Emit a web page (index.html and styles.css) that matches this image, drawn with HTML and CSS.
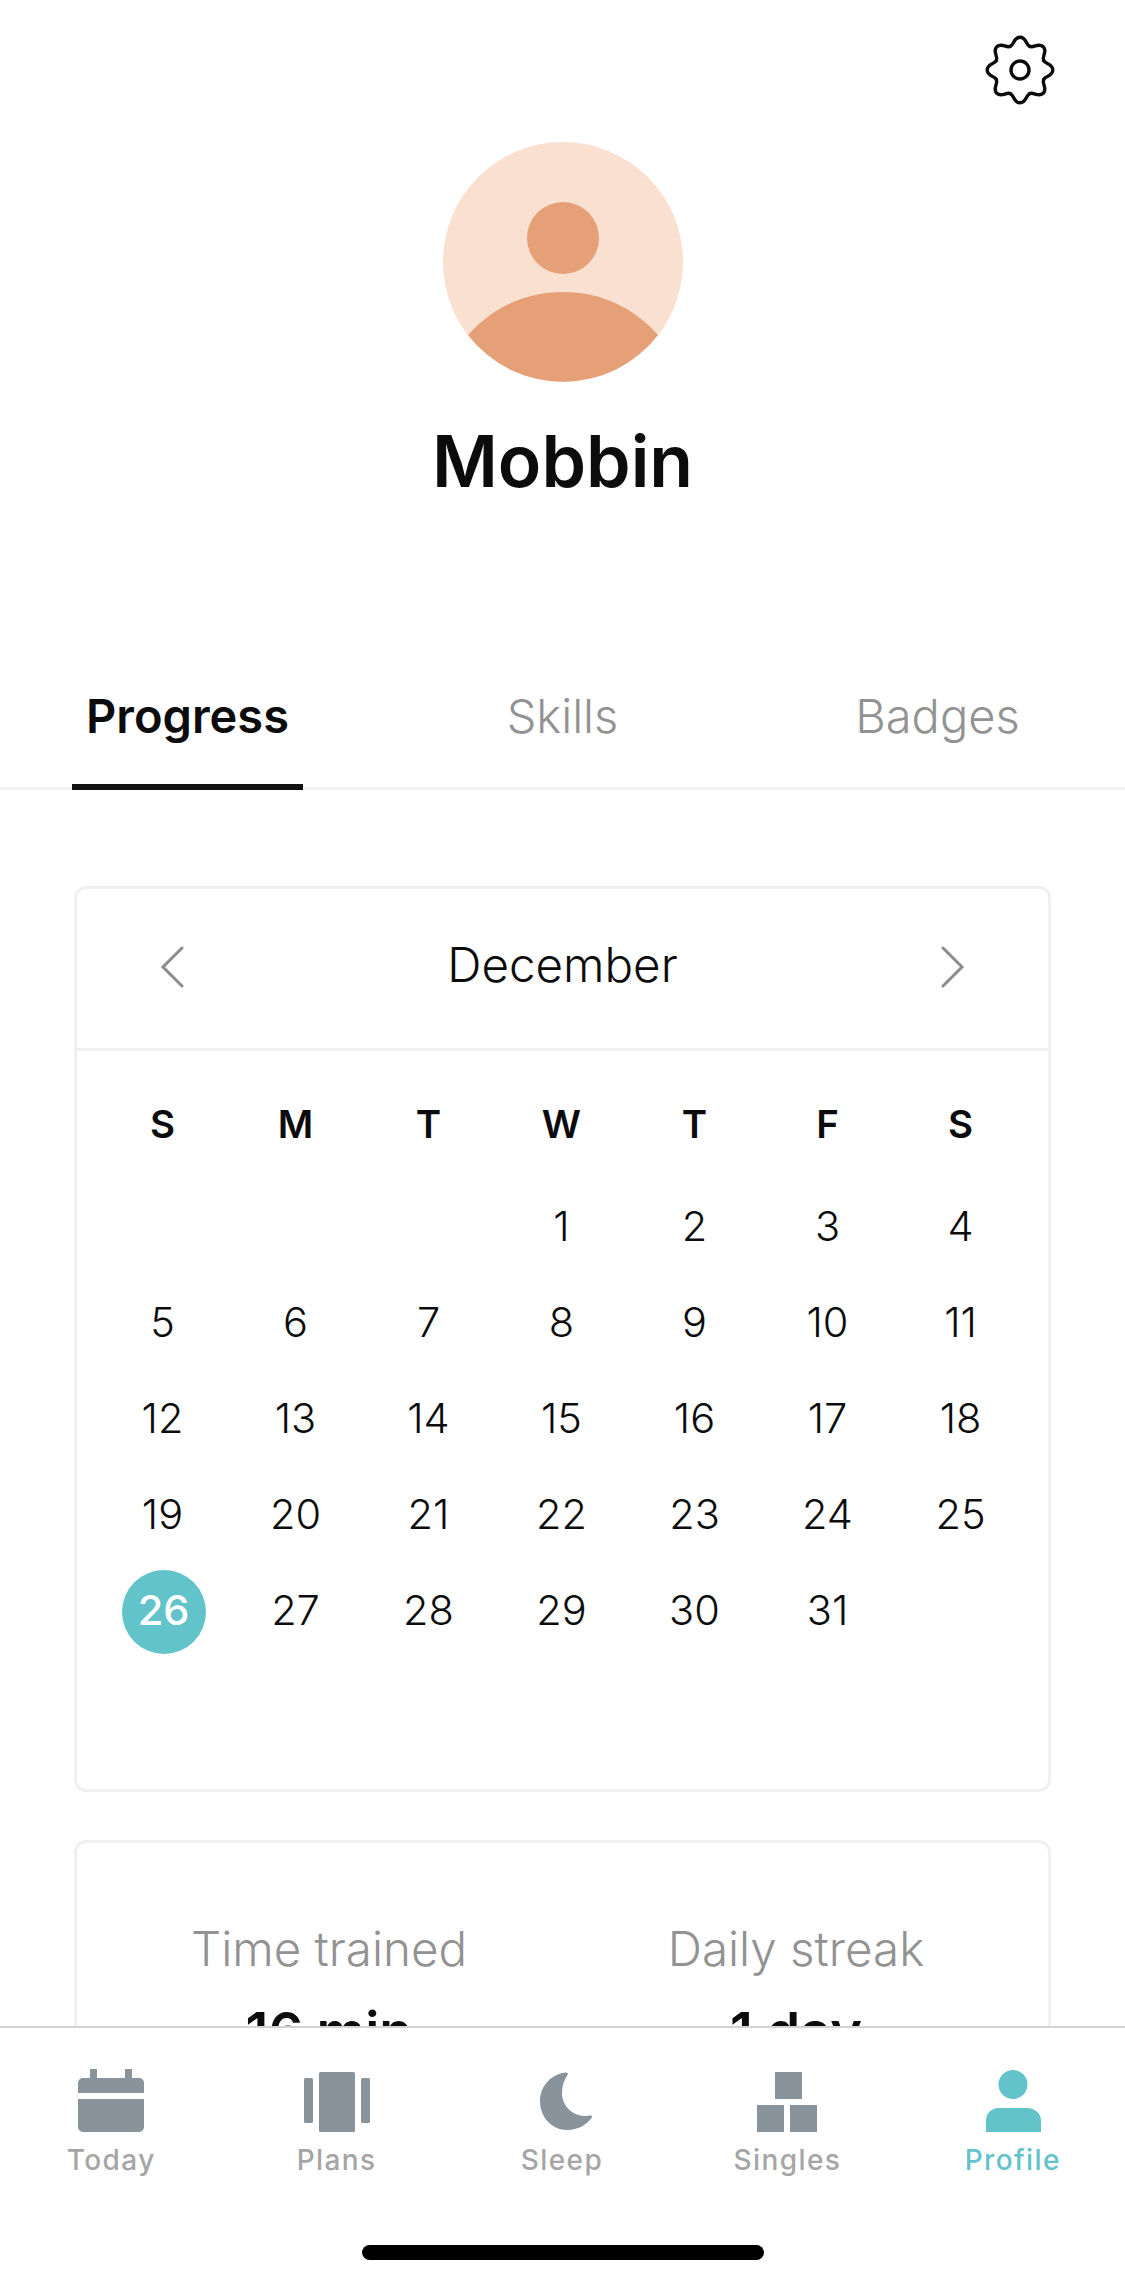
FILE: index.html
```html
<!DOCTYPE html>
<html lang="en">
<head>
<meta charset="utf-8">
<title>Profile</title>
<link rel="stylesheet" href="styles.css">
</head>
<body>
<div class="app">
  <main class="content">
    <header class="top">
      <button class="settings" aria-label="Settings">
        <svg width="72" height="72" viewBox="0 0 72 72" fill="none" stroke="#0c0c0c" stroke-width="3.4" stroke-linecap="round">
          <path d="M26.24 12.44C30.4 10.72 29.5 3.2 36 3.2C42.5 3.2 41.6 10.72 45.76 12.44"/>
          <path transform="rotate(45 36 36)" d="M26.24 12.44C30.4 10.72 29.5 3.2 36 3.2C42.5 3.2 41.6 10.72 45.76 12.44"/>
          <path transform="rotate(90 36 36)" d="M26.24 12.44C30.4 10.72 29.5 3.2 36 3.2C42.5 3.2 41.6 10.72 45.76 12.44"/>
          <path transform="rotate(135 36 36)" d="M26.24 12.44C30.4 10.72 29.5 3.2 36 3.2C42.5 3.2 41.6 10.72 45.76 12.44"/>
          <path transform="rotate(180 36 36)" d="M26.24 12.44C30.4 10.72 29.5 3.2 36 3.2C42.5 3.2 41.6 10.72 45.76 12.44"/>
          <path transform="rotate(225 36 36)" d="M26.24 12.44C30.4 10.72 29.5 3.2 36 3.2C42.5 3.2 41.6 10.72 45.76 12.44"/>
          <path transform="rotate(270 36 36)" d="M26.24 12.44C30.4 10.72 29.5 3.2 36 3.2C42.5 3.2 41.6 10.72 45.76 12.44"/>
          <path transform="rotate(315 36 36)" d="M26.24 12.44C30.4 10.72 29.5 3.2 36 3.2C42.5 3.2 41.6 10.72 45.76 12.44"/>
          <circle cx="36" cy="36" r="9"/>
        </svg>
      </button>
      <svg class="avatar" width="240" height="240" viewBox="0 0 240 240">
        <circle cx="120" cy="120" r="120" fill="#f9e0d0"/>
        <circle cx="120" cy="96" r="36" fill="#e5a077"/>
        <path d="M25 193C50 165 83 150 120 150s70 15 95 43a120 120 0 0 1-190 0Z" fill="#e5a077"/>
      </svg>
      <h1 class="name">Mobbin</h1>
    </header>

    <nav class="tabs">
      <a class="tab tab-active">Progress</a>
      <a class="tab">Skills</a>
      <a class="tab">Badges</a>
    </nav>

    <section class="card calendar">
      <div class="cal-head">
        <svg width="24" height="42" viewBox="0 0 24 42" fill="none" stroke="#8c8c8c" stroke-width="3" stroke-linecap="round"><path d="M22 2 3 21l19 19"/></svg>
        <span class="month">December</span>
        <svg width="24" height="42" viewBox="0 0 24 42" fill="none" stroke="#8c8c8c" stroke-width="3" stroke-linecap="round"><path d="m2 2 19 19L2 40"/></svg>
      </div>
      <div class="cal-grid">
        <span class="dow">S</span><span class="dow">M</span><span class="dow">T</span><span class="dow">W</span><span class="dow">T</span><span class="dow">F</span><span class="dow">S</span>
        <span></span><span></span><span></span><span>1</span><span>2</span><span>3</span><span>4</span>
        <span>5</span><span>6</span><span>7</span><span>8</span><span>9</span><span>10</span><span>11</span>
        <span>12</span><span>13</span><span>14</span><span>15</span><span>16</span><span>17</span><span>18</span>
        <span>19</span><span>20</span><span>21</span><span>22</span><span>23</span><span>24</span><span>25</span>
        <span><b class="today">26</b></span><span>27</span><span>28</span><span>29</span><span>30</span><span>31</span><span></span>
      </div>
    </section>

    <section class="card stats">
      <div class="stat"><div class="stat-label">Time trained</div><div class="stat-value">16 min</div></div>
      <div class="stat"><div class="stat-label">Daily streak</div><div class="stat-value">1 day</div></div>
    </section>
  </main>

  <footer class="bar">
    <div class="bar-items">
      <div class="item">
        <svg width="72" height="64" viewBox="0 0 72 64" fill="#88939b"><path d="M15 0h7v9h28V0h7v9h7a5 5 0 0 1 5 5v10H3V14a5 5 0 0 1 5-5h7ZM3 30h66v28a5 5 0 0 1-5 5H8a5 5 0 0 1-5-5Z"/></svg>
        <span>Today</span>
      </div>
      <div class="item">
        <svg width="72" height="64" viewBox="0 0 72 64" fill="#88939b"><rect x="3" y="9" width="9" height="45" rx="1.500"/><rect x="18" y="3" width="36" height="60" rx="1.500"/><rect x="60" y="9" width="9" height="45" rx="1.500"/></svg>
        <span>Plans</span>
      </div>
      <div class="item">
        <svg width="72" height="64" viewBox="0 0 72 64" fill="#88939b"><path transform="translate(5.500)" d="M34 3.500C36 3 37 4.500 36 6C32.500 11 30.500 17 30.500 24C30.500 37 41 47 54 47C56 47 57.500 46.800 59 46.500C60.500 46.300 61 47.500 60 49C55 56 46 61 36 61C20 61 8.500 48 8.500 32C8.500 17 20 5 34 3.500Z"/></svg>
        <span>Sleep</span>
      </div>
      <div class="item">
        <svg width="72" height="64" viewBox="0 0 72 64" fill="#88939b"><rect x="24" y="3" width="27" height="27"/><rect x="6" y="36" width="27" height="27"/><rect x="39" y="36" width="27" height="27"/></svg>
        <span>Singles</span>
      </div>
      <div class="item item-active">
        <svg width="72" height="64" viewBox="0 0 72 64" fill="#62c3ca"><ellipse cx="36" cy="15.500" rx="14.500" ry="14.500"/><path d="M9 63V52c0-7.500 5-13 13-13h28c8 0 14 5.500 14 13v11Z"/></svg>
        <span>Profile</span>
      </div>
    </div>
    <div class="home"></div>
  </footer>
</div>
</body>
</html>
```
FILE: styles.css
```css
* { box-sizing: border-box; }
html, body { margin: 0; padding: 0; background: #fff; }
body { font-family: Inter, "Liberation Sans", sans-serif; color: #0c0c0c; }
.app { width: 1125px; height: 2284px; display: flex; flex-direction: column; overflow: hidden; }
.content { flex: 1; min-height: 0; overflow: hidden; }

.top { display: flex; flex-direction: column; align-items: center; padding-top: 34px; }
.settings { align-self: flex-end; width: 72px; height: 72px; margin-right: 69px; padding: 0; border: 0; background: none; }
.settings svg { display: block; }
.avatar { display: block; margin-top: 36px; }
.name { margin: 37px 0 0; font-size: 71.5px; line-height: 85px; font-weight: 600; }

.tabs { display: grid; grid-template-columns: repeat(3, 375px); margin-top: 184px; border-bottom: 3px solid #f3f3f3; }
.tab { width: 231px; justify-self: center; margin-bottom: -3px; padding-bottom: 40px; border-bottom: 6px solid transparent; font-size: 47px; line-height: 56px; font-weight: 350; color: #929292; text-align: center; }
.tab-active { color: #0c0c0c; font-weight: 600; border-bottom-color: #121212; }

.card { margin: 0 74px; border: 3px solid #f0f0f0; border-radius: 12px; }
.calendar { margin-top: 96px; }
.cal-head { height: 162px; padding: 0 83px 3px; display: flex; align-items: center; justify-content: space-between; border-bottom: 3px solid #f0f0f0; }
.cal-head svg { display: block; }
.month { font-size: 47.5px; line-height: 56px; font-weight: 350; margin-bottom: 4px; }

.cal-grid { display: grid; grid-template-columns: repeat(7, 133px); grid-auto-rows: 96px; padding: 31px 21px 130.5px 19px; font-size: 41.5px; line-height: 48px; font-weight: 350; }
.cal-grid span { display: flex; align-items: center; justify-content: center; }
.cal-grid .dow { height: 84px; font-size: 38.5px; font-weight: 600; }
.today { width: 84px; height: 84px; margin: 3px 0 0 2px; padding-bottom: 4px; border-radius: 50%; background: #62c3ca; color: #fff; font-weight: 500; display: flex; align-items: center; justify-content: center; }

.stats { margin-top: 48.5px; padding: 78px 18.5px 60px; display: grid; grid-template-columns: repeat(2, 467px); }
.stat { text-align: center; }
.stat-label { font-size: 47.5px; line-height: 56px; font-weight: 350; color: #929292; }
.stat-value { margin-top: 23px; font-size: 54px; line-height: 64px; font-weight: 600; }

.bar { flex: none; height: 258px; border-top: 2px solid #d2d2d2; background: #fff; padding-top: 41px; }
.bar-items { display: grid; grid-template-columns: repeat(5, 225.4px); margin-left: -1.5px; }
.item { display: flex; flex-direction: column; align-items: center; font-size: 28px; line-height: 34px; font-weight: 500; letter-spacing: 1.4px; color: #a5a5a5; }
.item svg { display: block; margin-bottom: 10px; }
.item-active { color: #62c3ca; }
.home { width: 402px; height: 15px; margin: 68px auto 0; border-radius: 8px; background: #000; }
```
